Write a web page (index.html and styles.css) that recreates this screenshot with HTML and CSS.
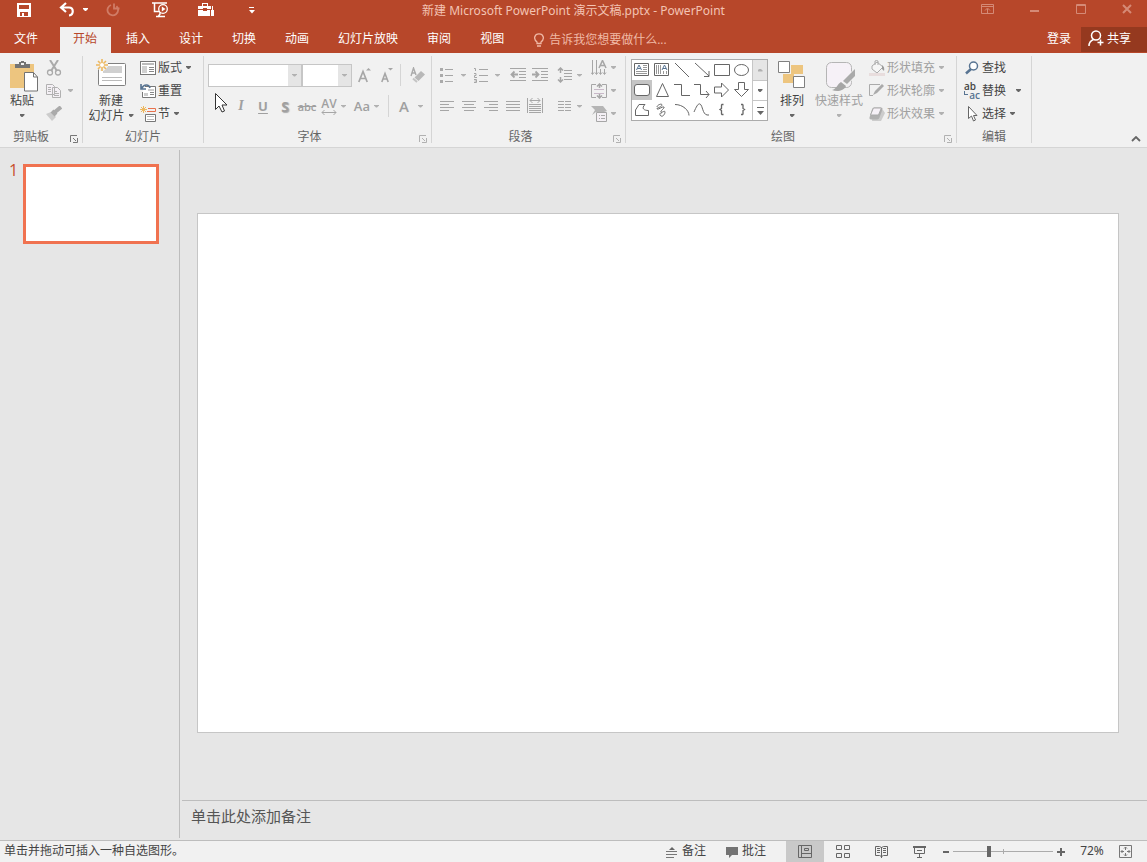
FILE: index.html
```html
<!DOCTYPE html>
<html lang="zh-CN">
<head>
<meta charset="utf-8">
<title>新建 Microsoft PowerPoint 演示文稿.pptx - PowerPoint</title>
<link rel="stylesheet" href="styles.css">
</head>
<body>
<header class="header">
  <div class="titlebar">
    <div class="qat">
      <button class="qat-save" aria-label="保存"><svg width="14" height="14" shape-rendering="crispEdges"><path fill="#fff" fill-rule="evenodd" d="M0 0h14v14H0zM2 2v4h10V2zM3 9v4h2v-3h2v3h4V9z"/></svg></button>
      <button class="qat-undo" aria-label="撤消"><svg width="16" height="15"><path d="M7 1L2 5.500l5 4.500M2.500 5.500H10c5 0 5 7.500 0 8" fill="none" stroke="#fff" stroke-width="2.200"/></svg><span class="caret"></span></button>
      <button class="qat-redo" aria-label="重复"><svg width="14" height="14"><path d="M5 2A5.300 5.300 0 1 0 10.500 3.200M8 .5v5h5.500" fill="none" stroke="#d07c66" stroke-width="1.800"/></svg></button>
      <button class="qat-show" aria-label="从头开始放映"><svg width="16" height="16"><path d="M0 1h15M2.500 1v8.500H7M6 15l2-3v-2M4 14.500h9" fill="none" stroke="#fff" stroke-width="1.500"/><circle cx="11" cy="7" r="4.300" fill="#b7472a" stroke="#fff" stroke-width="1.300"/><path d="M9.800 4.600v4.800L13.500 7z" fill="#fff"/></svg></button>
      <button class="qat-tools" aria-label="工具箱"><svg width="17" height="14" shape-rendering="crispEdges"><path fill="#fff" fill-rule="evenodd" d="M4 0h6v3h3v3H9v-1H5v1H0V3h4zM5 1v2h4V1zM0 7h5v1h4V7h3v6H0zM14 3h1v4h1v6h-3V7h1z"/></svg></button>
      <button aria-label="自定义快速访问工具栏"><svg width="6" height="8"><path d="M0 1.500h5" stroke="#fff"/><path d="M0 4h6L3 7.500z" fill="#fff"/></svg></button>
    </div>
    <h1 class="doc-title">新建 Microsoft PowerPoint 演示文稿.pptx - PowerPoint</h1>
    <div class="window-buttons">
      <button aria-label="功能区显示选项"><svg width="13" height="10"><path d="M.5.500h12v9H.5zM1 2.500h11M6.500 9V5M4 6.500L6.500 4 9 6.500" fill="none" stroke="#d58a76"/></svg></button>
      <button aria-label="最小化"><svg width="10" height="10"><path d="M0 7h9" stroke="#d58a76" stroke-width="2"/></svg></button>
      <button aria-label="最大化"><svg width="10" height="10"><path d="M.5.500h9v9H.5zM0 1.500h10" fill="none" stroke="#d58a76"/></svg></button>
      <button aria-label="关闭"><svg width="10" height="10"><path d="M1 1l8 8M9 1L1 9" stroke="#d58a76" stroke-width="2"/></svg></button>
    </div>
  </div>
  <nav class="tabs">
    <button class="tab tab-file">文件</button>
    <button class="tab tab-active">开始</button>
    <button class="tab">插入</button>
    <button class="tab">设计</button>
    <button class="tab">切换</button>
    <button class="tab">动画</button>
    <button class="tab">幻灯片放映</button>
    <button class="tab">审阅</button>
    <button class="tab">视图</button>
    <button class="tell-me"><svg width="10" height="14"><path d="M3 10.500V9C-1 6 .5.800 5 .8S11 6 7 9v1.500zM3 13h4" fill="none" stroke="#f0b9a6" stroke-width="1.300"/></svg>告诉我您想要做什么...</button>
    <button class="login">登录</button>
    <button class="share"><svg width="16" height="17"><circle cx="8" cy="5.500" r="4.500" fill="none" stroke="#fff" stroke-width="1.500"/><path d="M1 16c0-4 2-5.500 4.500-6.500M12.500 9.500v6M9.500 12.500h6" fill="none" stroke="#fff" stroke-width="1.500"/></svg>共享</button>
  </nav>
</header>

<section class="ribbon" aria-label="开始">
  <div class="group group-clipboard">
    <div class="group-body">
      <button class="big big-paste"><svg width="32" height="35"><path fill="#edc57f" d="M4 6h24v24H4z"/><path fill="#737373" d="M9 6h4V4h2V3h3v1h2v2h4v4H9z"/><path fill="#f1f1f1" d="M15 5h3v2h-3z"/><path d="M18.500 14.500h9l4 4.500v14h-13z" fill="#fff" stroke="#737373"/><path d="M27.500 14.500V19h4" fill="none" stroke="#737373"/></svg><span>粘贴</span><span class="caret caret-below"></span></button>
      <div class="stack">
        <button class="small off" aria-label="剪切"><svg width="16" height="16"><path d="M4 0l7 11M12 0L5 11" fill="none" stroke="#aaa" stroke-width="2"/><circle cx="4" cy="12.500" r="2.500" fill="none" stroke="#aaa" stroke-width="1.300"/><circle cx="12" cy="12.500" r="2.500" fill="none" stroke="#aaa" stroke-width="1.300"/></svg></button>
        <button class="small small-copy off" aria-label="复制"><svg width="16" height="16"><path d="M.5 1.500h6l2 2v8h-8zM6.500 4.500h5l3 3v7h-8z" fill="#f4f0f5" stroke="#b1b1b1"/><path d="M2 4.500h3M2 6.500h3M2 8.500h3M8 8.500h3M8 10.500h5M8 12.500h5" stroke="#b1b1b1"/></svg><span class="caret"></span></button>
        <button class="small off" aria-label="格式刷"><svg width="16" height="16"><path d="M0 8l5-2 5 5-4 4z" fill="#ccc"/><path d="M6 5l4 4M9 6l6-5" stroke="#aaa" stroke-width="4"/></svg></button>
      </div>
    </div>
    <div class="group-footer"><span>剪贴板</span><button class="launcher" aria-label="剪贴板窗格"><svg width="8" height="8"><path d="M.5 7V.5H7M3 3l3 3M7.500 3v4.500H3" fill="none" stroke="#777"/></svg></button></div>
  </div>

  <div class="group group-slides">
    <div class="group-body">
      <button class="big big-new"><svg width="32" height="35"><rect x="3.500" y="5.500" width="27" height="22" rx="1" fill="#fff" stroke="#808080"/><path d="M8 8h19v7H8z" fill="#d0d0d0"/><path d="M7 19.500h20M7 22.500h20" stroke="#bbb"/><path d="M7 1v12M1 7h12M3 3l8 8M11 3l-8 8" stroke="#f1f1f1" stroke-width="4"/><path d="M7 1v12M1 7h12M3 3l8 8M11 3l-8 8" stroke="#edb85f" stroke-width="1.600"/><circle cx="7" cy="7" r="2" fill="#fff"/></svg><span>新建</span><span class="with-caret">幻灯片<span class="caret"></span></span></button>
      <div class="stack stack-slides">
        <button class="small"><svg width="16" height="16" shape-rendering="crispEdges"><path d="M.5 1.500h15v13H.5z" fill="#fff" stroke="#777"/><path d="M2 3h12v2H2z" fill="#bbb"/><path d="M2 6h5v7H2z" fill="#d0d0d0"/><path d="M9 7.500h5M9 9.500h5M9 11.500h5" stroke="#888"/></svg>版式<span class="caret"></span></button>
        <button class="small"><svg width="16" height="16"><path d="M5 3.500h10.500v11h-13V9" fill="#fff" stroke="#777"/><path d="M8 6h6v2H8zM4 10h4v3H4z" fill="#ccc"/><path d="M10 9.500h4M10 11.500h4" stroke="#888"/><path d="M1 1v5h5M1.500 5.500C4 1 9 1 10 5" fill="none" stroke="#587492" stroke-width="1.600"/></svg>重置</button>
        <button class="small"><svg width="16" height="16"><path d="M3.500 0v7M0 3.500h7M1 1l5 5M6 1L1 6" stroke="#edb85f"/><path d="M8 2.500h7.500v3H7" fill="none" stroke="#e9714c"/><path d="M5.500 8.500h10v7h-10z" fill="#fff" stroke="#777"/><path d="M7 10.500h7M7 13.500h7" stroke="#bbb"/></svg>节<span class="caret"></span></button>
      </div>
    </div>
    <div class="group-footer"><span>幻灯片</span></div>
  </div>

  <div class="group group-font">
    <div class="group-body rows">
      <div class="row">
        <div class="combo combo-name"><select aria-label="字体" disabled></select><span class="combo-arrow"><span class="caret"></span></span></div>
        <div class="combo combo-size"><select aria-label="字号" disabled></select><span class="combo-arrow"><span class="caret"></span></span></div>
        <button class="tool tool-next" aria-label="增大字号"><svg width="14" height="16"><path d="M.8 15L5 4.500 9.200 15M2.500 11.500h5" fill="none" stroke="#a6a6a6" stroke-width="1.700"/><path d="M8 3.500h5L10.500 1z" fill="#a6a6a6"/></svg></button>
        <button class="tool" aria-label="减小字号"><svg width="14" height="16"><path d="M1.800 15L5 6.500 8.200 15M3 12h4" fill="none" stroke="#a6a6a6" stroke-width="1.600"/><path d="M8 1h5l-2.500 2.500z" fill="#a6a6a6"/></svg></button>
        <span class="sep"></span>
        <button class="tool tool-clear" aria-label="清除格式"><svg width="16" height="16"><path d="M2 9l2.500-8L7 8M3 6h3" fill="none" stroke="#aaa" stroke-width="1.400"/><path d="M5.500 10.500L12 4l4 3.500L9.500 14z" fill="#b8b8b8"/><path d="M4 11.500L8 15" stroke="#c4c4c4" stroke-width="2"/></svg></button>
      </div>
      <div class="row">
        <button class="tool tool-bold" aria-label="加粗"><svg class="pointer" width="14" height="22"><path d="M1.500 1.500v16l3.500-3.500 3 6 2.500-1-2.500-6h5z" fill="#fff" stroke="#333"/></svg></button>
        <button class="tool glyph glyph-i">I</button>
        <button class="tool glyph glyph-u">U</button>
        <button class="tool glyph glyph-s">S</button>
        <button class="tool glyph glyph-abc">abc</button>
        <button class="tool tool-av" aria-label="字符间距"><span class="spacing"><span>AV</span><svg width="16" height="5"><path d="M1 2.500h14M3.500 0L1 2.500 3.500 5M12.500 0L15 2.500 12.500 5" fill="none" stroke="#a6a6a6"/></svg></span><span class="caret"></span></button>
        <button class="tool tool-case glyph">Aa<span class="caret"></span></button>
        <span class="sep"></span>
        <button class="tool tool-color glyph">A<span class="caret"></span></button>
      </div>
    </div>
    <div class="group-footer"><span>字体</span><button class="launcher off" aria-label="字体设置"><svg width="8" height="8"><path d="M.5 7V.5H7M3 3l3 3M7.500 3v4.500H3" fill="none" stroke="#b1b1b1"/></svg></button></div>
  </div>

  <div class="group group-paragraph">
    <div class="group-body">
      <div class="rows">
        <div class="row">
          <button class="tool drop" aria-label="项目符号"><svg width="16" height="16"><path d="M6 2.500h8M6 8.500h8M6 14.500h8" stroke="#a6a6a6"/><path d="M1 1h3v3H1zM1 7h3v3H1zM1 13h3v3H1z" fill="#aaa"/></svg><span class="caret"></span></button>
          <button class="tool drop" aria-label="编号"><svg width="16" height="16"><path d="M6 2.500h9M6 8.500h9M6 14.500h9M1 1.500h1.500V4M1 6.500h2v2H1.500v2H4M1 12.500h2.500v3H1M1.500 14H3" fill="none" stroke="#a6a6a6"/></svg><span class="caret"></span></button>
          <button class="tool tool-outdent" aria-label="减少缩进"><svg width="16" height="14"><path d="M0 .5h16M9 3.500h7M9 6.500h7M9 9.500h7M0 12.500h16" stroke="#a6a6a6"/><path d="M8 6.500H1.500M4.500 3.500l-3 3 3 3" fill="none" stroke="#a6a6a6" stroke-width="1.800"/></svg></button>
          <button class="tool" aria-label="增加缩进"><svg width="16" height="14"><path d="M0 .5h16M9 3.500h7M9 6.500h7M9 9.500h7M0 12.500h16" stroke="#a6a6a6"/><path d="M0 6.500h6.500M3.500 3.500l3 3-3 3" fill="none" stroke="#a6a6a6" stroke-width="1.800"/></svg></button>
          <button class="tool drop drop-tight" aria-label="行距"><svg width="16" height="16"><path d="M7 3.500h8M7 6.500h8M7 9.500h8M7 12.500h8" stroke="#a6a6a6"/><path d="M3.500 1v5M1 3.500L3.500 1 6 3.500M3.500 10v5M1 12.500L3.500 15 6 12.500" fill="none" stroke="#a6a6a6" stroke-width="1.500"/></svg><span class="caret"></span></button>
        </div>
        <div class="row">
          <button class="tool" aria-label="左对齐"><svg width="14" height="12"><path d="M0 1.500h14M0 4.500h9M0 7.500h14M0 10.500h9" stroke="#a6a6a6"/></svg></button>
          <button class="tool" aria-label="居中"><svg width="14" height="12"><path d="M0 1.500h14M2 4.500h10M0 7.500h14M2 10.500h10" stroke="#a6a6a6"/></svg></button>
          <button class="tool" aria-label="右对齐"><svg width="14" height="12"><path d="M0 1.500h14M5 4.500h9M0 7.500h14M5 10.500h9" stroke="#a6a6a6"/></svg></button>
          <button class="tool" aria-label="两端对齐"><svg width="14" height="12"><path d="M0 1.500h14M0 4.500h14M0 7.500h14M0 10.500h14" stroke="#a6a6a6"/></svg></button>
          <button class="tool" aria-label="分散对齐"><svg width="16" height="16"><path d="M.5 0v15M15.500 0v15M2 6.500h12M2 8.500h12M2 10.500h12M2 12.500h12M2 14.500h12M3 2.500h10M5.500 0L3 2.500 5.500 5M10.500 0L13 2.500 10.500 5" fill="none" stroke="#a6a6a6"/></svg></button>
          <span class="sep sep-columns"></span>
          <button class="tool drop drop-columns" aria-label="分栏"><svg width="14" height="12"><path d="M0 1.500h6M0 4.500h6M0 7.500h6M0 10.500h6M7 1.500h6M7 4.500h6M7 7.500h6M7 10.500h6" stroke="#a6a6a6"/></svg><span class="caret"></span></button>
        </div>
      </div>
      <div class="stack stack-text">
        <button class="small off" aria-label="文字方向"><svg width="16" height="16"><path d="M1.500 0v14M5.500 0v14M9.500 9v5M13.500 9v5M0 12.500l1.500 2 1.500-2M4 12.500l1.500 2 1.500-2M8 12.500l1.500 2 1.500-2M12 12.500l1.500 2 1.500-2" fill="none" stroke="#a6a6a6"/><path d="M8 8l3.500-7.500L15 8M9.500 5.500h4" fill="none" stroke="#a6a6a6" stroke-width="1.500"/></svg><span class="caret"></span></button>
        <button class="small off" aria-label="对齐文本"><svg width="16" height="16"><path d="M5 1.500H.5v13H5M11 1.500h4.500v13H11" fill="none" stroke="#a6a6a6"/><path d="M3 6.500h10M3 10.500h10" stroke="#c8b8c8"/><path d="M8.500 1v4M6 3.500L8.500 1 11 3.500M8.500 11v4M6 12.500L8.500 15l2.500-2.500" fill="none" stroke="#a6a6a6" stroke-width="1.500"/></svg><span class="caret"></span></button>
        <button class="small off" aria-label="转换为 SmartArt"><svg width="16" height="16"><path d="M0 0h12l4 5-3 1H5l-4 3 3-5z" fill="#b5b5b5"/><path d="M5.500 6.500h10v9h-10z" fill="#f4f0f5" stroke="#a6a6a6"/><path d="M8 9.500h1M10 9.500h4M8 12.500h1M10 12.500h4" stroke="#aaa"/></svg><span class="caret"></span></button>
      </div>
    </div>
    <div class="group-footer"><span>段落</span><button class="launcher off" aria-label="段落设置"><svg width="8" height="8"><path d="M.5 7V.5H7M3 3l3 3M7.500 3v4.500H3" fill="none" stroke="#b1b1b1"/></svg></button></div>
  </div>

  <div class="group group-drawing">
    <div class="group-body">
      <div class="gallery">
        <div class="shapes">
          <button aria-label="文本框"><svg viewBox="0 0 20 20"><path d="M2.500 3.500h14v12h-14z"/><path d="M11 5.500h4M11 7.500h4M11 9.500h4M4 11.500h11M4 13.500h11" stroke="#999"/><path d="M4.500 10L7 5l2.500 5M5.500 8.500h3" stroke="#587492"/></svg></button>
          <button aria-label="竖排文本框"><svg viewBox="0 0 20 20"><path d="M2.500 3.500h14v12h-14z"/><path d="M4.500 5v9M6.500 5v9M8.500 5v9M11.500 11v3M14.500 11v3" stroke="#999"/><path d="M10 10l2.500-5 2.500 5M11 8.500h3" stroke="#587492"/></svg></button>
          <button aria-label="直线"><svg viewBox="0 0 20 20"><path d="M3 3l14 14"/></svg></button>
          <button aria-label="箭头"><svg viewBox="0 0 20 20"><path d="M3 3l14 13M17 11v5.500h-5"/></svg></button>
          <button aria-label="矩形"><svg viewBox="0 0 20 20"><path d="M2.500 4.500h15v11h-15z"/></svg></button>
          <button aria-label="椭圆"><svg viewBox="0 0 20 20"><ellipse cx="9.500" cy="10" rx="7" ry="5.500"/></svg></button>
          <button class="selected" aria-label="圆角矩形"><svg viewBox="0 0 20 20"><rect x="2.500" y="4.500" width="15" height="11" rx="2.500" fill="#fff"/></svg></button>
          <button aria-label="三角形"><svg viewBox="0 0 20 20"><path d="M10.500 3.500l6 13h-12z"/></svg></button>
          <button aria-label="肘形连接符"><svg viewBox="0 0 20 20"><path d="M2 4.500h7.500v11H18"/></svg></button>
          <button aria-label="肘形箭头"><svg viewBox="0 0 20 20"><path d="M2 4.500h6.500v10H17M14 11l3 3.500-3 3.500"/></svg></button>
          <button aria-label="右箭头"><svg viewBox="0 0 20 20"><path d="M2.500 7h7V3l7 7-7 7v-4h-7z"/></svg></button>
          <button aria-label="下箭头"><svg viewBox="0 0 20 20"><path d="M6.500 2.500h6v7H16.500l-7 7-7-7h4z"/></svg></button>
          <button aria-label="任意多边形"><svg viewBox="0 0 20 20"><path d="M7 4.500h6c-4 4-1 6 3.500 6v5h-13V10z"/></svg></button>
          <button aria-label="自由曲线"><svg viewBox="0 0 20 20"><path d="M5 7c0-2 5-4 5-2S4 8 5 9s6-3 7-2-4 4-3 5 4-2 4 0-2 5-4 4-1-4 1-3"/></svg></button>
          <button aria-label="弧形"><svg viewBox="0 0 20 20"><path d="M3 4.500c8 0 14 6 14 11"/></svg></button>
          <button aria-label="曲线"><svg viewBox="0 0 20 20"><path d="M2 12C5 5 7 2 9 5s2 11 8 10"/></svg></button>
          <button aria-label="左大括号"><svg viewBox="0 0 20 20"><path d="M11.500 4.500H10L9.500 5v3.500L8 9.500l1.500 1V14l.5.500h1.500" stroke-width="1.300"/></svg></button>
          <button aria-label="右大括号"><svg viewBox="0 0 20 20"><path d="M9 4.500h1.500L11 5v3.500l1.500 1-1.500 1V14l-.5.500H9" stroke-width="1.300"/></svg></button>
        </div>
        <div class="gallery-nav">
          <button class="nav-off" aria-label="上一行"><span class="caret caret-up"></span></button>
          <button aria-label="下一行"><span class="caret"></span></button>
          <button aria-label="其他"><svg width="7" height="8"><path d="M0 .5h7" stroke="#666"/><path d="M0 4h7L3.500 8z" fill="#666"/></svg></button>
        </div>
      </div>
      <button class="big big-arrange"><svg width="32" height="35"><path d="M15 7h12v9h-9v9H7v-9h8z" fill="#edc57f"/><path d="M2.500 3.500h11v11h-11zM17.500 18.500h11v11h-11z" fill="#fff" stroke="#808080"/></svg><span>排列</span><span class="caret caret-below"></span></button>
      <button class="big big-styles off"><svg width="32" height="35"><rect x="3.500" y="4.500" width="25" height="25" rx="5" fill="#f6f1f7" stroke="#b5b5b5"/><path d="M33 8L19 25l5 4 9-12z" fill="#f1f1f1"/><path d="M32 11v7l-8 8-4-3z" fill="#aaa"/><path d="M18 24l5 4c-2 5-9 6-14 4 5-1 5-6 9-8z" fill="#a6a6a6"/></svg><span>快速样式</span><span class="caret caret-below"></span></button>
      <div class="stack stack-effects">
        <button class="small off"><svg width="16" height="16"><path d="M3 6l5-4 6 5-6 6-5-4z" fill="#f6f6f6" stroke="#aaa"/><path d="M6 5V1q1.500-1 3 0v4" fill="none" stroke="#aaa"/><path d="M13 5q3 2 2 6l-2-2z" fill="#999"/><path d="M0 13h16v3H0z" fill="#e8dddd"/></svg>形状填充<span class="caret"></span></button>
        <button class="small off"><svg width="16" height="16"><path d="M11 1.500H.5v11H4" fill="none" stroke="#aaa"/><path d="M4 12l2-4 7-7 2 2-7 7z" fill="#aaa"/></svg>形状轮廓<span class="caret"></span></button>
        <button class="small off"><svg width="16" height="16"><path d="M4 5l10-1 2 3-4 8H3z" fill="#ccc"/><path d="M5 1.500h7q2 0 1.500 2l-3 8q-.5 2-2.500 2H2q-2 0-1.500-2l2.500-8q.5-2 2-2z" fill="#b0b0b0"/><path d="M5 2h6.500q1 0 .5 1L9.500 9H1.500L4 3q.5-1 1-1z" fill="#f6f1f7" stroke="#aaa"/></svg>形状效果<span class="caret"></span></button>
      </div>
    </div>
    <div class="group-footer"><span>绘图</span><button class="launcher off" aria-label="设置形状格式"><svg width="8" height="8"><path d="M.5 7V.5H7M3 3l3 3M7.500 3v4.500H3" fill="none" stroke="#b1b1b1"/></svg></button></div>
  </div>

  <div class="group group-edit">
    <div class="group-body">
      <div class="stack">
        <button class="small"><svg width="16" height="16"><circle cx="9.500" cy="6" r="4" fill="#fff" stroke="#587492" stroke-width="1.500"/><path d="M7 9l-5 4.500" stroke="#587492" stroke-width="2.500"/></svg>查找</button>
        <button class="small small-replace"><span class="replace-icon"><span>ab</span><span class="replace-to"><i></i>ac</span></span>替换<span class="caret"></span></button>
        <button class="small"><svg width="16" height="16"><path d="M4.500.500v12l3-2.500 2 5 2-1-2-4.500h3.500z" fill="#fff" stroke="#666"/></svg>选择<span class="caret"></span></button>
      </div>
    </div>
    <div class="group-footer"><span>编辑</span></div>
  </div>
  <button class="collapse" aria-label="折叠功能区"><svg width="10" height="6"><path d="M1 5l4-4 4 4" fill="none" stroke="#666" stroke-width="1.800"/></svg></button>
</section>

<main class="workspace">
  <aside class="thumbs">
    <span class="thumb-number">1</span>
    <button class="thumb" aria-label="幻灯片 1"></button>
  </aside>
  <section class="editor">
    <div class="stage"><div class="slide"></div></div>
    <textarea class="notes" aria-label="备注" placeholder="单击此处添加备注"></textarea>
  </section>
</main>

<footer class="status">
  <span class="status-text">单击并拖动可插入一种自选图形。</span>
  <button class="status-btn"><svg width="12" height="12"><path d="M3 4h6L6 1z" fill="#666"/><path d="M0 5.500h11M0 8.500h11M0 11.500h8" stroke="#777"/></svg><span>备注</span></button>
  <button class="status-btn"><svg width="12" height="12"><path d="M0 1h12v8H6l-3 3V9H0z" fill="#737373"/></svg><span>批注</span></button>
  <div class="views">
    <button class="view view-on" aria-label="普通视图"><svg width="14" height="13"><path d="M.5.500h13v12H.5zM3.500 1v11M4 8.500h9M6.500 3.500h4v2h-4z" fill="none" stroke="#666"/></svg></button>
    <button class="view" aria-label="幻灯片浏览"><svg width="14" height="13"><path d="M.5.500h5v4h-5zM8.500.500h5v4h-5zM.5 8.500h5v4h-5zM8.500 8.500h5v4h-5z" fill="none" stroke="#666"/></svg></button>
    <button class="view" aria-label="阅读视图"><svg width="13" height="13"><path d="M.5 1.500h4l2 1 2-1h4v9h-4l-2 1-2-1h-4zM6.500 2v11M2 3.500h3M2 5.500h3M2 7.500h3M8 3.500h3M8 5.500h3M8 7.500h3" fill="none" stroke="#666"/></svg></button>
    <button class="view" aria-label="幻灯片放映"><svg width="13" height="12"><path d="M0 1h13" stroke="#666" stroke-width="2"/><path d="M1.500 2v5.500h10V2M4 4.500h5M6.500 8v3M4 11.500h5" fill="none" stroke="#666"/></svg></button>
  </div>
  <button class="zoom-btn" aria-label="缩小"><svg width="8" height="8"><path d="M1 4h6" stroke="#666" stroke-width="2"/></svg></button>
  <input class="zoom" type="range" min="0" max="100" value="35" aria-label="显示比例">
  <button class="zoom-btn" aria-label="放大"><svg width="8" height="8"><path d="M0 4h8M4 0v8" stroke="#666" stroke-width="2"/></svg></button>
  <button class="zoom-value">72%</button>
  <button class="fit" aria-label="适应窗口"><svg width="13" height="13"><path d="M.5.500h12v12H.5zM6.500 2v3M6.500 8v3M2 6.500h3M8 6.500h3M5 3.500L6.500 2 8 3.500M5 9.500L6.500 11 8 9.500M3.500 5L2 6.500 3.500 8M9.500 5L11 6.500 9.500 8" fill="none" stroke="#777"/></svg></button>
</footer>
</body>
</html>
```

FILE: styles.css
```css
* { box-sizing: border-box; }

body {
  margin: 0;
  height: 100vh;
  display: flex;
  flex-direction: column;
  overflow: hidden;
  background: #e6e6e6;
  color: #444;
  font: 12px/15px "Open Sans", "Noto Sans CJK SC", sans-serif;
}

button, textarea, select {
  margin: 0;
  padding: 0;
  border: 0;
  background: none;
  color: inherit;
  font: inherit;
}

button { display: flex; align-items: center; justify-content: center; white-space: nowrap; }
svg { display: block; flex: none; }

.caret {
  flex: none;
  width: 5px;
  height: 3px;
  background: #666;
  clip-path: polygon(0 0, 100% 0, 100% 33%, 60% 100%, 40% 100%, 0 33%);
}
.caret-up { clip-path: polygon(40% 0, 60% 0, 100% 67%, 100% 100%, 0 100%, 0 67%); }
.off .caret, .tool .caret, .combo .caret, .nav-off .caret { background: #b1b1b1; }

/* Title bar and tabs */
.header { background: #b7472a; color: #fff; }
.titlebar { display: grid; grid-template-columns: 1fr auto 1fr; height: 27px; }
.qat { display: flex; align-items: flex-start; padding: 2px 0 0 17px; }
.qat .caret { background: #fff; }
.qat button { height: 15px; }
.qat-save { margin-right: 28px; }
.qat-undo { gap: 8px; margin-right: 18px; }
.qat-redo { margin-right: 32px; }
.qat-show { margin-right: 30px; }
.qat-tools { margin-right: 34px; }
.doc-title { margin: 0; padding-top: 3px; font: 400 12px/15px "Noto Sans", "Noto Sans CJK SC", sans-serif; color: #f3c3b3; }
.window-buttons { display: flex; justify-content: flex-end; align-items: flex-start; gap: 36px; padding: 4px 15px 0 0; }

.tabs { display: flex; gap: 2px; height: 26px; }
.tab { padding: 0 14px 3px 13px; }
.tab-file { padding: 0 20px 3px 14px; }
.tab-active { background: #f1f1f1; color: #b7472a; }
.tell-me { gap: 5px; margin: 0 auto 0 14px; padding-bottom: 1px; color: #f0b9a6; }
.login { padding: 0 8px 3px; }
.share { width: 66px; height: 25px; gap: 3px; padding: 0 16px 2px 0; justify-content: flex-end; background: #95391f; }

/* Ribbon */
.ribbon { display: flex; padding: 3px 0 4px; background: #f1f1f1; border-bottom: 1px solid #d5d5d5; }
.group { display: flex; flex-direction: column; flex: none; height: 87px; border-right: 1px solid #d5d5d5; }
.group-body { display: flex; height: 73px; }
.group-footer { display: flex; align-items: flex-end; height: 14px; line-height: 12px; color: #666; }
.group-footer span { flex: 1; text-align: center; }
.launcher { width: 16px; height: 8px; }
.group-clipboard { width: 83px; }
.group-clipboard .group-footer span { padding-right: 4px; }
.group-slides { width: 121px; }
.group-font { width: 228px; }
.group-paragraph { width: 194px; }
.group-drawing { width: 331px; }
.group-edit { width: 75px; }

.big { flex: none; flex-direction: column; justify-content: flex-start; padding-top: 2px; height: 70px; }
.big-paste { width: 44px; }
.big-new { width: 56px; margin-right: 1px; }
.big-arrange { width: 40px; margin-left: 4px; }
.big-styles { width: 52px; margin-left: 1px; }
.caret-below { margin-top: 6px; }
.with-caret { display: flex; align-items: center; gap: 4px; }
.off { color: #a0a0a0; }

.stack { display: grid; grid-template-rows: repeat(3, 23px); justify-items: start; }
.group-clipboard .stack { margin-left: 2px; }
.small { gap: 2px; }
.small-copy { gap: 6px; }
.small .caret { margin-left: 2px; }
.small-copy .caret, .stack-text .caret { margin-left: 0; }
.stack-text { margin-left: 8px; }
.stack-text .small { gap: 4px; }
.stack-effects { margin-left: 4px; }
.group-edit .stack { margin-left: 7px; }
.small-replace .caret { margin-left: 8px; }

.rows { display: flex; flex-direction: column; gap: 9px; padding-top: 8px; }
.row { display: flex; align-items: center; height: 22px; }
.group-font .rows, .group-font .group-body { padding-left: 4px; }
.group-paragraph .rows { padding-left: 4px; width: 151px; }
.tool { flex: none; width: 22px; height: 22px; color: #a0a0a0; }
.tool-next { margin-left: 2px; }
.sep { width: 1px; height: 22px; background: #d5d5d5; margin: 0 5px 0 2px; }
.combo { display: flex; height: 23px; border: 1px solid #c6c6c6; background: #fff; }
.combo select { flex: 1; min-width: 0; appearance: none; }
.combo-arrow { display: flex; align-items: center; justify-content: center; width: 13px; background: #e5e5e5; }
.combo-name { width: 94px; }
.combo-size { width: 50px; }

.glyph { font-weight: 600; font-size: 13px; }
.glyph-i { font: italic bold 14px "Liberation Serif", serif; }
.glyph-u { text-decoration: underline; text-underline-offset: 2px; font-weight: 700; }
.glyph-s { font-weight: 700; font-size: 14px; text-shadow: 1px 1px 1px #aaa; }
.glyph-abc { font-size: 11px; font-weight: 600; text-decoration: line-through; }
.tool-bold { position: relative; }
.pointer { position: absolute; left: 6px; top: -3px; }
.tool-av { width: 28px; gap: 4px; justify-content: flex-end; }
.spacing { display: flex; flex-direction: column; align-items: center; line-height: 12px; font-weight: 600; }
.tool-case { width: 33px; gap: 4px; justify-content: flex-end; }
.tool-case + .sep { margin: 0 9px; }
.tool-color { width: 25px; gap: 9px; justify-content: flex-end; font-size: 15px; }

.drop { width: 34px; gap: 6px; justify-content: flex-start; padding-left: 3px; }
.tool-outdent { margin-left: 3px; }
.drop-tight { gap: 4px; padding-left: 6px; }
.sep-columns { margin: 0 8px 0 4px; }
.drop-columns { gap: 5px; padding-left: 0; }

.gallery { display: flex; width: 137px; height: 62px; margin: 3px 0 0 5px; border: 1px solid #ababab; background: #fff; }
.shapes { display: grid; grid-template: repeat(3, 20px) / repeat(6, 20px); }
.shapes svg { width: 20px; height: 20px; fill: none; stroke: #666; }
.shapes .selected { background: #c5c5c5; }
.gallery-nav { display: grid; grid-template-rows: repeat(3, 20px); flex: 1; border-left: 1px solid #c6c6c6; }
.gallery-nav button + button { border-top: 1px solid #c6c6c6; }
.nav-off { background: #e5e5e5; }

.replace-icon { width: 16px; display: flex; flex-direction: column; font-size: 10px; line-height: 9px; font-weight: 600; text-align: left; }
.replace-to { display: flex; justify-content: flex-end; color: #587492; }
.replace-to i { width: 4px; height: 4px; margin-right: 1px; border: solid #587492; border-width: 0 0 1px 1px; }
.collapse { margin: auto 6px 1px auto; }

/* Workspace */
.workspace { flex: 1; display: flex; min-height: 0; }
.thumbs { flex: none; display: flex; align-items: flex-start; width: 180px; margin: 2px 0; padding: 14px 20px 0 9px; border-right: 1px solid #bdbdbd; }
.thumb-number { width: 14px; font-size: 16px; line-height: 13px; color: #c8502f; }
.thumb { flex: 1; height: 80px; border: 3px solid #f07250; background: #fff; }
.editor { flex: 1; display: flex; flex-direction: column; }
.stage { flex: 1; display: flex; align-items: center; padding: 0 28px 2px 17px; }
.slide { width: 100%; aspect-ratio: 922 / 520; border: 1px solid #c6c6c6; background: #fff; }
.notes {
  height: 40px;
  margin-left: 2px;
  padding: 5px 9px 0;
  border-top: 1px solid #bdbdbd;
  resize: none;
  overflow: hidden;
  font-size: 15px;
  line-height: 20px;
}
.notes::placeholder { color: #555; }

/* Status bar */
.status { display: flex; align-items: center; height: 22px; padding: 0 15px 0 4px; background: #f1f1f1; border-top: 1px solid #bdbdbd; }
.status-text { margin-right: auto; }
.status-text, .status-btn span, .zoom-value { padding-bottom: 3px; }
.status-btn { gap: 4px; margin-right: 20px; }
.views { display: flex; height: 21px; }
.view { width: 38px; }
.view-on { background: #c9c9c9; }
.zoom-btn { width: 15px; height: 21px; }
.zoom {
  width: 100px;
  height: 12px;
  margin: 0;
  appearance: none;
  background:
    linear-gradient(#ababab, #ababab) 50px 50% / 1px 5px no-repeat,
    linear-gradient(#ababab, #ababab) 0 50% / 100% 1px no-repeat;
}
.zoom::-webkit-slider-thumb { appearance: none; width: 4px; height: 11px; background: #666; }
.zoom-value { width: 34px; margin: 0 10px 0 7px; font-family: "Noto Sans", sans-serif; }
```
